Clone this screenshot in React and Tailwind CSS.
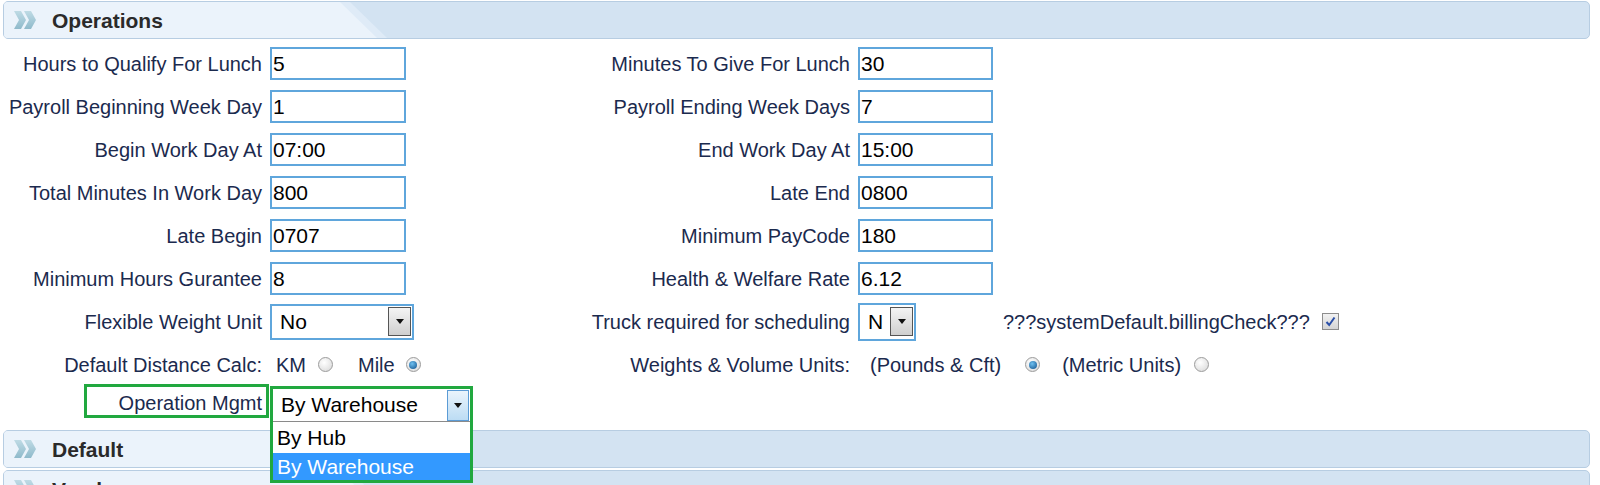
import React from "react";

function Chevrons() {
  return (
    <svg width="23" height="18" viewBox="0 0 23 18" className="shrink-0">
      <defs>
        <linearGradient id="chev" x1="0" y1="0" x2="0" y2="1">
          <stop offset="0" stopColor="#bfdbe5" />
          <stop offset="1" stopColor="#8fbacb" />
        </linearGradient>
      </defs>
      <polygon points="0,0 7,0 12,9 7,18 0,18 5,9" fill="url(#chev)" />
      <polygon points="10,0 17,0 22,9 17,18 10,18 15,9" fill="url(#chev)" />
    </svg>
  );
}

function SectionHeader({ title, className = "" }) {
  return (
    <div
      className={
        "relative ml-[3px] w-[1587px] h-[38px] rounded-[5px] border border-[#b7cde2] bg-[#d3e3f2] overflow-hidden " +
        className
      }
    >
      <div className="absolute inset-0 bg-[#dfebf7] [clip-path:polygon(0_0,346px_0,383px_100%,0_100%)]" />
      <div className="absolute inset-0 bg-[#ebf3fb] [clip-path:polygon(0_0,336px_0,373px_100%,0_100%)]" />
      <div className="relative flex items-center h-full pl-[10px] gap-[15px]">
        <Chevrons />
        <span className="text-[21px] font-bold text-[#2a2a2a] leading-none">{title}</span>
      </div>
    </div>
  );
}

function Label({ children }) {
  return (
    <div className="flex items-center justify-end pr-[4px] text-[20px] text-[#1b2a4e] whitespace-nowrap">
      {children}
    </div>
  );
}

function TextInput({ value, w = "w-[136px]" }) {
  return (
    <div className="flex items-center pl-[4px]">
      <div
        className={
          w +
          " h-[33px] border-2 border-[#5fa6dc] flex items-center pl-[1px] text-[21px] text-black bg-white"
        }
      >
        {value}
      </div>
    </div>
  );
}

function GrayButton() {
  return (
    <div className="w-[23px] h-[29px] border border-[#555] bg-[linear-gradient(#f4f4f4,#cfcfcf)] flex items-center justify-center">
      <svg width="8" height="5" viewBox="0 0 8 5">
        <polygon points="0,0 8,0 4,5" fill="#111" />
      </svg>
    </div>
  );
}

function Radio({ checked }) {
  return (
    <div className="w-[15px] h-[15px] rounded-full border border-[#9b9b9b] bg-[radial-gradient(circle_at_40%_35%,#ffffff,#d6d6d6)] flex items-center justify-center shrink-0">
      {checked && (
        <div className="w-[8px] h-[8px] rounded-full bg-[radial-gradient(circle_at_40%_35%,#6fc0f0,#0f4f8a)]" />
      )}
    </div>
  );
}

export default function App() {
  const rows = [
    ["Hours to Qualify For Lunch", "5", "Minutes To Give For Lunch", "30"],
    ["Payroll Beginning Week Day", "1", "Payroll Ending Week Days", "7"],
    ["Begin Work Day At", "07:00", "End Work Day At", "15:00"],
    ["Total Minutes In Work Day", "800", "Late End", "0800"],
    ["Late Begin", "0707", "Minimum PayCode", "180"],
    ["Minimum Hours Gurantee", "8", "Health & Welfare Rate", "6.12"],
  ];
  return (
    <div className="w-[1600px] h-[485px] overflow-hidden bg-white font-['Liberation_Sans',Arial,sans-serif] pt-[1px]">
      <SectionHeader title="Operations" />
      <div className="grid grid-cols-[266px_322px_266px_1fr] auto-rows-[43px] mt-[3px]">
        {rows.map((r, i) => (
          <React.Fragment key={i}>
            <Label>{r[0]}</Label>
            <TextInput value={r[1]} />
            <Label>{r[2]}</Label>
            <TextInput value={r[3]} w="w-[135px]" />
          </React.Fragment>
        ))}

        {/* row 7 */}
        <Label>Flexible Weight Unit</Label>
        <div className="flex items-center pl-[4px]">
          <div className="w-[144px] h-[36px] border-2 border-[#5fa6dc] flex items-center justify-between pl-[8px] pr-[1px] text-[21px] text-black bg-white">
            <span>No</span>
            <GrayButton />
          </div>
        </div>
        <Label>Truck required for scheduling</Label>
        <div className="flex items-center pl-[4px]">
          <div className="w-[58px] h-[38px] border-2 border-[#5fa6dc] flex items-center justify-between pl-[8px] pr-[1px] text-[21px] text-black bg-white">
            <span>N</span>
            <GrayButton />
          </div>
          <span className="ml-[87px] text-[20px] text-[#1b2a4e] whitespace-nowrap">
            ???systemDefault.billingCheck???
          </span>
          <div className="ml-[12px] w-[17px] h-[17px] border border-[#8d8d8d] bg-[linear-gradient(#f2f2f2,#d4d4d4)] flex items-center justify-center">
            <svg width="11" height="11" viewBox="0 0 11 11">
              <path d="M1.5 6 L4.2 9 L9.5 1.5" fill="none" stroke="#2a4fa8" strokeWidth="2" />
            </svg>
          </div>
        </div>

        {/* row 8 */}
        <Label>Default Distance Calc:</Label>
        <div className="flex items-center pl-[10px] text-[20px] text-[#1b2a4e]">
          <span>KM</span>
          <div className="ml-[12px]">
            <Radio />
          </div>
          <span className="ml-[25px]">Mile</span>
          <div className="ml-[11px]">
            <Radio checked />
          </div>
        </div>
        <Label>Weights &amp; Volume Units:</Label>
        <div className="flex items-center pl-[16px] text-[20px] text-[#1b2a4e] whitespace-nowrap">
          <span>(Pounds &amp; Cft)</span>
          <div className="ml-[24px]">
            <Radio checked />
          </div>
          <span className="ml-[22px]">(Metric Units)</span>
          <div className="ml-[13px]">
            <Radio />
          </div>
        </div>

        {/* row 9 */}
        <div className="flex items-start justify-end">
          <div className="mt-[-2px] -mr-[3px] w-[185px] h-[34px] border-[3px] border-[#21a83f] flex items-center justify-end pr-[4px] pt-[4px] text-[20px] text-[#1b2a4e] whitespace-nowrap">
            Operation Mgmt
          </div>
        </div>
        <div className="relative">
          <div className="absolute left-[4px] top-0 z-10 w-[203px] h-[97px] border-[3px] border-[#21a83f] bg-white flex flex-col">
            <div className="h-[33px] flex items-center justify-between pl-[8px] pr-[1px] text-[21px] text-black border-b border-[#8a8a8a]">
              <span>By Warehouse</span>
              <div className="w-[22px] h-[31px] border border-[#5b9bd5] bg-[linear-gradient(#eaf4fc,#bcdcf4)] flex items-center justify-center">
                <svg width="8" height="5" viewBox="0 0 8 5">
                  <polygon points="0,0 8,0 4,5" fill="#111" />
                </svg>
              </div>
            </div>
            <div className="h-[31px] flex items-center pl-[4px] text-[21px] text-black">By Hub</div>
            <div className="h-[27px] flex items-center pl-[4px] text-[21px] text-white bg-[#3399ff]">
              By Warehouse
            </div>
          </div>
        </div>
        <div />
        <div />
      </div>
      <SectionHeader title="Default" className="mt-[1px]" />
      <SectionHeader title="Vendors" className="mt-[2px]" />
    </div>
  );
}
